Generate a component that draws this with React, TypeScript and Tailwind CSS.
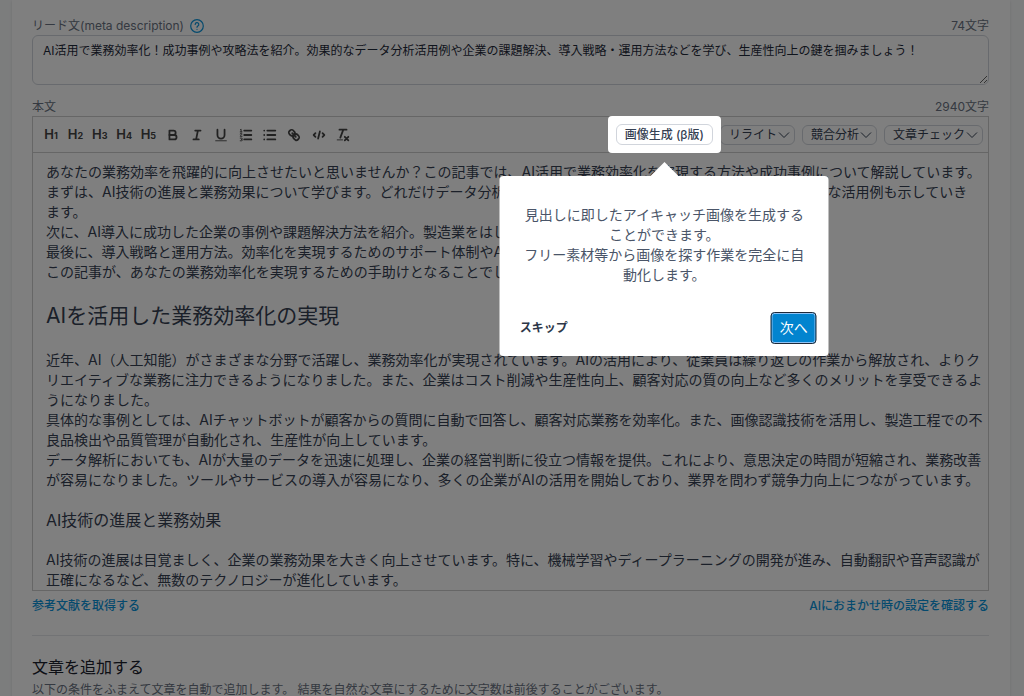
import { useState } from 'react';
import type { ReactNode } from 'react';

const LEAD =
  'AI活用で業務効率化！成功事例や攻略法を紹介。効果的なデータ分析活用例や企業の課題解決、導入戦略・運用方法などを学び、生産性向上の鍵を掴みましょう！';

const INTRO = [
  'あなたの業務効率を飛躍的に向上させたいと思いませんか？この記事では、AI活用で業務効率化を実現する方法や成功事例について解説しています。',
  'まずは、AI技術の進展と業務効果について学びます。どれだけデータ分析が業務の改善に役立つのかを解説し、さらに具体的な活用例も示していき',
  'ます。',
  '次に、AI導入に成功した企業の事例や課題解決方法を紹介。製造業をはじめとした事例を取り上げます。',
  '最後に、導入戦略と運用方法。効率化を実現するためのサポート体制やAI人材の育成について解説します。',
  'この記事が、あなたの業務効率化を実現するための手助けとなることでしょう。',
];

const SECTION = [
  '近年、AI（人工知能）がさまざまな分野で活躍し、業務効率化が実現されています。AIの活用により、従業員は繰り返しの作業から解放され、よりク',
  'リエイティブな業務に注力できるようになりました。また、企業はコスト削減や生産性向上、顧客対応の質の向上など多くのメリットを享受できるよ',
  'うになりました。',
  '具体的な事例としては、AIチャットボットが顧客からの質問に自動で回答し、顧客対応業務を効率化。また、画像認識技術を活用し、製造工程での不',
  '良品検出や品質管理が自動化され、生産性が向上しています。',
  'データ解析においても、AIが大量のデータを迅速に処理し、企業の経営判断に役立つ情報を提供。これにより、意思決定の時間が短縮され、業務改善',
  'が容易になりました。ツールやサービスの導入が容易になり、多くの企業がAIの活用を開始しており、業界を問わず競争力向上につながっています。',
];

const SUBSECTION = [
  'AI技術の進展は目覚ましく、企業の業務効果を大きく向上させています。特に、機械学習やディープラーニングの開発が進み、自動翻訳や音声認識が',
  '正確になるなど、無数のテクノロジーが進化しています。',
];

function Lines({ lines }: { lines: string[] }) {
  return (
    <p className="text-sm leading-5 whitespace-nowrap">
      {lines.map(line => (
        <span key={line} className="block">{line}</span>
      ))}
    </p>
  );
}

function Icon({ children }: { children: ReactNode }) {
  return (
    <svg viewBox="0 0 18 18" className="size-4" fill="none" stroke="currentColor" strokeWidth="2" strokeLinecap="round" strokeLinejoin="round">
      {children}
    </svg>
  );
}

const FORMATS: { label: string; icon: ReactNode }[] = [
  {
    label: '太字',
    icon: (
      <Icon>
        <path d="M5,4H9.5A2.5,2.5,0,0,1,9.5,9H5Z" />
        <path d="M5,9h5.5A2.5,2.5,0,0,1,10.5,14H5Z" />
      </Icon>
    ),
  },
  { label: '斜体', icon: <Icon><path d="M7,4H13M5,14H11M8,14L10,4" /></Icon> },
  {
    label: '下線',
    icon: (
      <Icon>
        <path d="M5,3V9a4,4,0,0,0,8,0V3" />
        <path d="M3,15.5H15" strokeWidth="1" />
      </Icon>
    ),
  },
  {
    label: '番号付きリスト',
    icon: (
      <Icon>
        <path d="M7,4H15M7,9H15M7,14H15" />
        <path d="M2.5,5.5H4.5M3.5,5.5V2.5L2.7,3M2.5,8a1,1,0,0,1,2,0c0,.8-2,1.2-2,2.5h2M2.5,12.5h1.6a.7.7,0,0,1,0,1.5H3.5h.6a.7.7,0,0,1,0,1.5H2.5" strokeWidth="1" />
      </Icon>
    ),
  },
  {
    label: '箇条書き',
    icon: <Icon><path d="M6,4H15M6,9H15M6,14H15M2.5,4h.01M2.5,9h.01M2.5,14h.01" /></Icon>,
  },
  {
    label: 'リンク',
    icon: (
      <Icon>
        <path d="M7,7L11,11" />
        <path d="M8.9,4.577a3.476,3.476,0,0,1,.36,4.679A3.476,3.476,0,0,1,4.577,8.9C3.185,7.5,2.035,6.4,4.217,4.217S7.5,3.185,8.9,4.577Z" />
        <path d="M13.423,9.1a3.476,3.476,0,0,0-4.679-.36,3.476,3.476,0,0,0,.36,4.679c1.392,1.392,2.5,2.542,4.679.36S14.815,10.5,13.423,9.1Z" />
      </Icon>
    ),
  },
  { label: 'コード', icon: <Icon><path d="M5,7L3,9L5,11M13,7L15,9L13,11M10,5L8,13" /></Icon> },
  {
    label: '書式をクリア',
    icon: (
      <Icon>
        <path d="M5,3H13M6,12L9.35,3M11,11L15,15M15,11L11,15" />
        <path d="M2.5,14.5H8.5" strokeWidth="1" />
      </Icon>
    ),
  },
];

function MenuButton({ label }: { label: string }) {
  return (
    <button className="flex h-5 items-center gap-px rounded-md border border-gray-300 pr-1 pl-2 text-xs whitespace-nowrap text-gray-700">
      {label}
      <svg viewBox="0 0 12 12" className="size-3" fill="none" stroke="currentColor" strokeWidth="1">
        <path d="M1,3.5L6,8.5L11,3.5" />
      </svg>
    </button>
  );
}

function TourStep({ onClose }: { onClose: () => void }) {
  return (
    <div
      role="dialog"
      aria-label="画像生成の使い方"
      className="absolute top-full left-1/2 z-20 mt-[31px] w-[329px] -translate-x-1/2 rounded bg-white text-[#4a5568]"
    >
      <svg viewBox="0 0 28 14" className="absolute bottom-full left-1/2 h-3.5 w-7 -translate-x-1/2 fill-white">
        <path d="M0,14L14,0L28,14Z" />
      </svg>
      <p className="px-6 pt-[29px] text-center text-sm leading-5">
        見出しに即したアイキャッチ画像を生成する
        <br />
        ことができます。
        <br />
        フリー素材等から画像を探す作業を完全に自
        <br />
        動化します。
      </p>
      <div className="mt-[27px] flex items-center justify-between pr-3 pb-3 pl-5">
        <button className="text-xs font-bold text-[#2d3748]" onClick={onClose}>スキップ</button>
        <button
          className="h-8 rounded border border-[#1f2937] bg-[#0284cf] px-2 text-sm leading-5 text-white ring-1 ring-[#8fc3f5] ring-inset"
          onClick={onClose}
        >
          次へ
        </button>
      </div>
    </div>
  );
}

export default function App() {
  const [lead, setLead] = useState(LEAD);
  const [tour, setTour] = useState(true);

  return (
    <div className="h-screen overflow-hidden bg-gray-50 px-3 pr-3.5 font-['Inter','Noto_Sans_CJK_JP',sans-serif] text-gray-700">
      <main className="min-h-full bg-white pt-[17px] pr-[21px] pl-5 shadow-sm">
        <div className="flex h-[18px] items-center justify-between text-xs text-gray-500">
          <div className="flex items-center gap-1.5">
            <label htmlFor="lead">リード文(meta description)</label>
            <button aria-label="ヘルプ" className="text-[#0b95dc]">
              <svg viewBox="0 0 14 14" className="size-3.5" fill="none" stroke="currentColor" strokeWidth="1.2" strokeLinecap="round">
                <circle cx="7" cy="7" r="6.3" />
                <path d="M5.2,5.5a1.8,1.8,0,1,1,2.7,1.5c-.6.4-.9.7-.9,1.3M7,10.3v.05" />
              </svg>
            </button>
          </div>
          <span>74文字</span>
        </div>
        <textarea
          id="lead"
          className="block h-[50px] w-full overflow-hidden rounded-md border border-gray-300 px-2.5 py-1.5 text-xs leading-[18px] text-gray-800"
          value={lead}
          onChange={e => setLead(e.target.value)}
        />

        <div className="mt-3 flex h-[19px] items-center justify-between text-xs text-gray-500">
          <span>本文</span>
          <span>2940文字</span>
        </div>
        <section className="border border-[#ccc]">
          <div className="flex h-9 items-center justify-between border-b border-[#ccc] pr-[5px] pl-1.5">
            <div className="grid w-[316px] grid-cols-13 text-[#444]">
              {[1, 2, 3, 4, 5].map(n => (
                <button key={n} className="flex items-baseline justify-center text-[13px] leading-4 font-semibold">
                  H<span className="text-[9px] font-bold">{n}</span>
                </button>
              ))}
              {FORMATS.map(f => (
                <button key={f.label} aria-label={f.label} className="flex items-center justify-center">
                  {f.icon}
                </button>
              ))}
            </div>
            <div className="flex items-center gap-[7px]">
              <div className="relative">
                {tour && (
                  <div className="absolute -inset-2 z-10 rounded bg-white shadow-[0_0_0_2000px_rgba(0,0,0,0.5)]" />
                )}
                <button className="relative z-20 block h-[21px] rounded-md border border-gray-300 bg-white px-2 text-xs font-medium whitespace-nowrap">
                  画像生成 (β版)
                </button>
                {tour && <TourStep onClose={() => setTour(false)} />}
              </div>
              <MenuButton label="リライト" />
              <MenuButton label="競合分析" />
              <MenuButton label="文章チェック" />
            </div>
          </div>
          <article className="overflow-hidden pt-[9px] pl-[13px]">
            <Lines lines={INTRO} />
            <h2 className="flex h-[68px] items-center text-[21px]">AIを活用した業務効率化の実現</h2>
            <Lines lines={SECTION} />
            <h3 className="flex h-[60px] items-center text-base">AI技術の進展と業務効果</h3>
            <Lines lines={SUBSECTION} />
          </article>
        </section>
        <div className="mt-1.5 flex justify-between text-xs leading-[18px] font-medium text-[#0b95dc]">
          <a href="#references">参考文献を取得する</a>
          <a href="#settings">AIにおまかせ時の設定を確認する</a>
        </div>

        <section className="mt-5 border-t border-gray-200 pt-[19px]">
          <h2 className="text-base leading-6 text-[#1a202c]">文章を追加する</h2>
          <p className="text-xs leading-[22px] text-gray-500">
            以下の条件をふまえて文章を自動で追加します。 結果を自然な文章にするために文字数は前後することがございます。
          </p>
        </section>
      </main>
    </div>
  );
}
